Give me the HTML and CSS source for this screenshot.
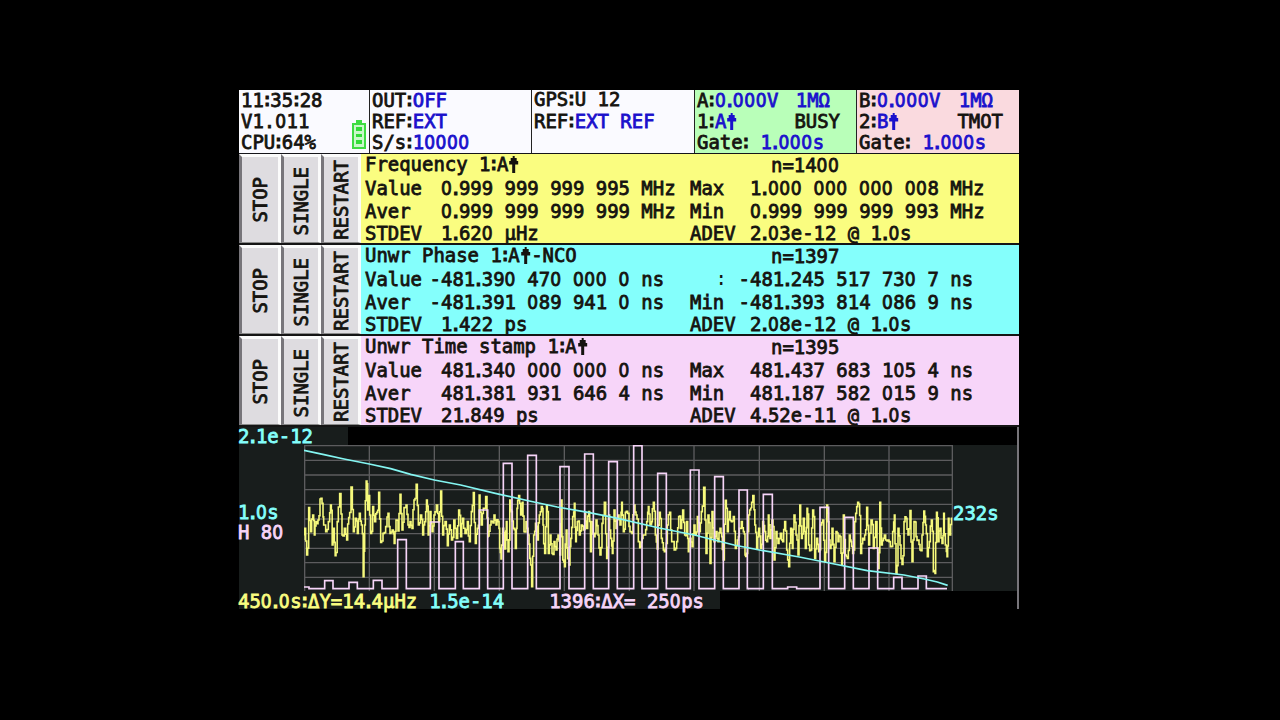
FILE: index.html
```html
<!DOCTYPE html>
<html>
<head>
  <meta charset="utf-8">
  <title>Frequency Counter</title>
  <link rel="stylesheet" href="styles.css">
</head>
<body>
  <svg width="0" height="0" class="defs">
    <symbol id="edge" viewBox="0 0 11 18">
      <path d="M4.500 0h2v2h2v3h1.500v3.500H7V17H4V8.500H1V5h1.500V2h2z" fill="currentColor"/>
    </symbol>
  </svg>

  <div class="screen">
    <div class="header">
      <div class="cell system">
        <div>11:35:28</div>
        <div>V1<b>.</b>011</div>
        <div>CPU:64%</div>
        <svg class="battery" width="14" height="29" viewBox="0 0 14 29">
          <path d="M4 0h6v3h4v26H0V3h4z" fill="#3edc42"/>
          <path d="M2 5h10v22H2z" fill="#c9f8ca"/>
          <path d="M4 7h6v4H4zM4 14h6v3H4zM4 20h6v4H4z" fill="#32dc37"/>
        </svg>
      </div>
      <div class="cell">
        <div>OUT:<span class="blue">OFF</span></div>
        <div>REF:<span class="blue">EXT</span></div>
        <div>S/s:<span class="blue">10000</span></div>
      </div>
      <div class="cell gps">
        <div>GPS:U 12</div>
        <div>REF:<span class="blue">EXT REF</span></div>
      </div>
      <div class="cell chan-a">
        <div class="split"><span>A:<span class="blue">0.000V</span></span><span class="blue unit">1MΩ</span></div>
        <div class="split"><span>1:<span class="blue">A<svg class="edge"><use href="#edge"/></svg></span></span><span class="state">BUSY</span></div>
        <div>Gate: <span class="blue">1.000s</span></div>
      </div>
      <div class="cell chan-b">
        <div class="split"><span>B:<span class="blue">0.000V</span></span><span class="blue unit">1MΩ</span></div>
        <div class="split"><span>2:<span class="blue">B<svg class="edge"><use href="#edge"/></svg></span></span><span class="state">TMOT</span></div>
        <div>Gate: <span class="blue">1.000s</span></div>
      </div>
    </div>

    <div class="panel yellow">
      <div class="buttons">
        <button><span>STOP</span></button>
        <button><span>SINGLE</span></button>
        <button><span>RESTART</span></button>
      </div>
      <div class="readout">
        <div class="title"><span>Frequency 1:A<svg class="edge"><use href="#edge"/></svg></span><span class="count">n=1400</span></div>
        <div class="row"><span>Value</span><span>0.999 999 999 995 MHz</span><span>Max</span><span>1.000 000 000 008 MHz</span></div>
        <div class="row"><span>Aver</span><span>0.999 999 999 999 MHz</span><span>Min</span><span>0.999 999 999 993 MHz</span></div>
        <div class="row"><span>STDEV</span><span>1.620 µHz</span><span>ADEV</span><span>2.03e-12 @ 1.0s</span></div>
      </div>
    </div>

    <div class="panel cyan">
      <div class="buttons">
        <button><span>STOP</span></button>
        <button><span>SINGLE</span></button>
        <button><span>RESTART</span></button>
      </div>
      <div class="readout">
        <div class="title"><span>Unwr Phase 1:A<svg class="edge"><use href="#edge"/></svg>-NCO</span><span class="count">n=1397</span></div>
        <div class="row"><span>Value</span><span class="neg">-481.390 470 000 0 ns</span><span class="partial">:</span><span class="neg">-481.245 517 730 7 ns</span></div>
        <div class="row"><span>Aver</span><span class="neg">-481.391 089 941 0 ns</span><span>Min</span><span class="neg">-481.393 814 086 9 ns</span></div>
        <div class="row"><span>STDEV</span><span>1.422 ps</span><span>ADEV</span><span>2.08e-12 @ 1.0s</span></div>
      </div>
    </div>

    <div class="panel pink">
      <div class="buttons">
        <button><span>STOP</span></button>
        <button><span>SINGLE</span></button>
        <button><span>RESTART</span></button>
      </div>
      <div class="readout">
        <div class="title"><span>Unwr Time stamp 1:A<svg class="edge"><use href="#edge"/></svg></span><span class="count">n=1395</span></div>
        <div class="row"><span>Value</span><span>481.340 000 000 0 ns</span><span>Max</span><span>481.437 683 105 4 ns</span></div>
        <div class="row"><span>Aver</span><span>481.381 931 646 4 ns</span><span>Min</span><span>481.187 582 015 9 ns</span></div>
        <div class="row"><span>STDEV</span><span>21.849 ps</span><span>ADEV</span><span>4.52e-11 @ 1.0s</span></div>
      </div>
    </div>

    <div class="graph">
      <div class="scale-top">2.1e-12</div>
      <div class="graph-body">
        <div class="axis-left">
          <div class="c-cyan">1.0s</div>
          <div class="c-pink">H 80</div>
        </div>
        <!-- plot units are 1/3 px -->
        <svg class="plot" width="649" height="146" viewBox="0 0 1947 438">
          <path class="grid" d="M0 2H1947M0 46H1947M0 90H1947M0 134H1947M0 178H1947M0 222H1947M0 266H1947M0 310H1947M0 353H1947M0 397H1947"/>
          <path class="grid" d="M2 0V438M196 0V438M391 0V438M586 0V438M781 0V438M976 0V438M1170 0V438M1366 0V438M1561 0V438M1755 0V438M1945 0V438"/>
          <g transform="translate(-207 -60)">
            <polyline class="freq" points="206,345 212,310 218,390 224,248 230,320 236,270 240,330 246,290 252,285 258,222 264,235 268,300 276,320 284,290 289,240 294,360 298,310 303,392 310,290 318,206 324,330 332,310 338,345 344,278 352,186 358,320 364,280 370,325 376,265 382,300 387,455 391,300 396,168 400,255 404,212 410,325 416,245 422,290 428,262 434,202 440,352 448,325 456,305 462,265 468,325 475,315 480,355 486,285 492,318 498,208 504,315 510,248 516,240 522,300 528,290 534,310 540,225 547,178 553,300 560,270 566,330 572,290 577,225 582,330 588,260 594,320 600,270 608,240 614,290 620,198 626,330 634,290 640,362 646,300 653,345 660,285 668,340 674,255 680,335 686,280 694,325 700,290 706,350 712,260 718,203 724,355 730,310 735,210 742,300 748,250 756,215 762,335"/>
            <path class="hist" d="M206 486H222V491H269V467H294V491H342V472H367V491H415V466H441V491H488V344H514V491H586V291H612V491H661V350H685V491H733V255H758V491H805"/>
          </g>
          <g transform="translate(555 -60)">
            <polyline class="freq" points="0,335 6,300 12,290 18,270 24,300 30,290 34,370 38,402 44,310 50,372 54,290 60,380 65,225 70,260 76,310 82,370 86,250 92,212 98,270 102,232 108,320 114,290 120,330 125,400 131,485 137,330 142,295 148,345 154,270 160,245 164,300 170,385 175,240 181,385 186,330 192,385 198,350 204,375 210,330 215,390 219,225 224,405 229,425 234,315 238,400 243,420 248,340 254,275 258,235 262,350 268,290 274,330 280,300 286,315 290,262 296,310 302,260 307,380 312,290 318,335 324,285 330,330 336,390 342,295 350,232 356,400 362,270 368,340 372,385 378,255 384,310 390,270 396,300 400,232 406,320 412,262 420,265 426,320 432,325 438,240 444,270 452,350 457,365 462,340 470,330 476,290 480,245 486,300 490,290 496,232 502,330 507,372 514,262 520,340 526,375 532,370 538,300 545,262 551,350 560,375 566,350 572,275 578,310 584,255 590,330 596,290 600,380 606,340 612,365 618,300 622,330 628,275 634,320 640,260 648,187 654,385 660,270 666,415 672,260 678,350 684,320 690,350 696,310 700,335 706,405 712,226 718,320 724,260 730,290 736,275 742,370 748,345 754,310 760,290 766,320 770,390 776,385 782,270 788,250"/>
            <path class="hist" d="M40 491H43V115H69V491H116V91H142V491H213V125H240V491H287V87H313V491H359V110H385V491H434V62H459V491H506V145H532V491H604V135H630V491H677V155H703V491H750V195H775V491H780"/>
          </g>
          <g transform="translate(1335 -60)">
            <polyline class="freq" points="8,250 15,212 20,300 26,370 32,310 38,370 44,290 50,320 56,350 60,270 66,340 72,285 78,405 84,320 90,355 98,325 104,350 110,290 116,375 122,425 128,310 132,370 138,270 144,330 150,390 155,240 160,340 166,280 172,370 176,250 182,360 188,375 194,255 200,400 206,340 212,380 218,300 224,285 230,410 236,240 240,290 246,370 252,310 258,410 264,320 270,350 276,335 280,420 286,270 292,390 298,400 304,330 308,350 314,385 320,290 326,245 332,237 338,385 344,340 350,330 356,247 362,360 370,285 376,370 384,290 390,430 395,232 400,360 406,340 414,345 420,345 428,365 434,320 438,270 444,445 450,310 456,360 462,418 468,290 474,280 480,330 486,257 492,410 498,290 504,335 510,345 516,375 522,330 527,258 532,300 538,395 544,350 550,285 556,440 560,445 565,262 570,350 576,310 582,355 586,265 592,360 596,395 600,280 605,330 610,280"/>
            <path class="hist" d="M-2 491H43V208H70V491H116V486H143V491H213V247H239V491H287V277H313V491H360V369H386V491H434V457H459V491H507V453H532V491H594"/>
          </g>
          <polyline class="phase" points="0,16 60,29 120,42 196,57 260,71 320,88 391,105 470,120 574,145 676,168 760,186 856,203 931,218 1066,249 1171,270 1290,300 1366,315 1486,336 1576,354 1690,377 1800,390 1861,402 1900,411 1931,421"/>
        </svg>
        <div class="axis-right c-cyan">232s</div>
      </div>
      <div class="scale-bottom">
        <span class="c-yellow">450.0s:ΔY=14.4µHz</span><span class="c-cyan tau">1.5e-14</span><span class="c-pink bins">1396:ΔX= 250ps</span>
      </div>
    </div>
  </div>

  <script src="lcd.js"></script>
</body>
</html>
```
FILE: styles.css
```css
* {
  margin: 0;
  padding: 0;
  box-sizing: border-box;
}

body {
  width: 1280px;
  height: 720px;
  overflow: hidden;
  background: #000;
  padding: 90px 0 0 239px;
}

.defs {
  display: block;
}

.screen {
  width: 780px;
  height: 518px;
  font-family: "DejaVu Sans Mono", monospace;
  font-size: 18.95px;
  line-height: 21px;
  color: #15130f;
  -webkit-text-stroke: 0.8px currentColor;
}

/* narrow punctuation and open zero of the display font */
.nar {
  margin: 0 -2.44px;
  -webkit-text-stroke-width: 1.1px;
}

.colon {
  position: relative;
  top: -1px;
}

.zero {
  font-family: "DejaVu Sans Condensed", "DejaVu Sans", sans-serif;
  font-stretch: condensed;
  letter-spacing: 0.55px;
}

.edge {
  width: 11.375px;
  height: 18px;
  vertical-align: -3px;
}

.header {
  display: grid;
  grid-template-columns: 131px 162px 163px 162px 162px;
  height: 64px;
  border-bottom: 2px solid #15151a;
}

.cell {
  background: #fafaff;
  padding-left: 2px;
  border-right: 1px solid #222;
}

.cell > div {
  height: 21px;
}

.cell:last-child {
  border-right: none;
}

.cell b {
  font-weight: normal;
}

.system {
  position: relative;
}

.battery {
  position: absolute;
  right: 3px;
  bottom: 4px;
}

.gps > div:first-child {
  margin-top: -1px;
  margin-bottom: 1px;
}

.chan-a {
  background: #b9ffb9;
}

.chan-b {
  background: #fadadf;
}

.split {
  display: flex;
  justify-content: space-between;
}

.unit {
  margin-right: 26px;
}

.state {
  margin-right: 16px;
}

.blue {
  color: #1a10cc;
}

.panel {
  display: flex;
  height: 91px;
  border-bottom: 2px solid #151515;
}

.yellow {
  background: #fafd80;
}

.cyan {
  background: #84fffc;
}

.pink {
  background: #f7d5f9;
}

.buttons {
  display: grid;
  grid-template-columns: 42px 40px 40px;
}

.buttons button {
  display: flex;
  align-items: center;
  justify-content: center;
  font: inherit;
  color: inherit;
  background: #dedce0;
  border: solid;
  border-width: 3px 3px 1px 3px;
  border-color: #fbfbfb #fbfbfb #8a8a8a #77757a;
  overflow: hidden;
  -webkit-text-stroke: inherit;
}

.buttons button:nth-child(2) {
  padding-top: 4px;
}

.buttons span {
  writing-mode: vertical-rl;
  transform: rotate(180deg);
}

.readout {
  flex: 1;
  padding-left: 4px;
}

.title {
  display: grid;
  grid-template-columns: 406px 1fr;
  line-height: 20px;
  height: 23px;
}

.count {
  padding-top: 1px;
}

.row {
  display: grid;
  grid-template-columns: 76px 249px 60px 1fr;
  height: 22.6px;
  line-height: 22.6px;
}

.neg {
  margin-left: -11.4px;
}

.partial {
  padding-left: 28px;
}

.partial .nar {
  -webkit-text-stroke-width: 0;
}

.graph {
  border-right: 2px solid #77757a;
  height: 182px;
}

.scale-top {
  width: 109px;
  height: 18px;
  line-height: 19px;
  background: #181d1c;
  color: #84fffc;
  text-indent: -1px;
}

.graph-body {
  display: flex;
  height: 146px;
  background: #181d1c;
}

.axis-left {
  width: 65px;
  padding-top: 58px;
  line-height: 19.500px;
  text-indent: -1px;
}

.plot {
  flex: none;
}

.grid {
  fill: none;
  stroke: #5c5c5e;
  stroke-width: 4;
}

.freq {
  fill: none;
  stroke: #f6f97c;
  stroke-width: 4.8;
}

.hist {
  fill: none;
  stroke: #f7d5f9;
  stroke-width: 5;
}

.phase {
  fill: none;
  stroke: #84f6f2;
  stroke-width: 5;
}

.axis-right {
  padding-top: 58px;
  line-height: 20px;
}

.scale-bottom {
  display: flex;
  width: 481px;
  height: 18px;
  line-height: 20px;
  background: #181d1c;
  text-indent: -1px;
}

.c-cyan {
  color: #84fffc;
}

.c-pink {
  color: #f7d5f9;
}

.c-yellow {
  color: #fafd80;
}

.tau {
  margin-left: 13px;
}

.bins {
  margin-left: 46px;
}
```
FILE: lcd.js
```js
// colons and dots are narrower than the other characters, zero has no dot inside
const lcd = document.querySelector('.screen');
const walker = document.createTreeWalker(lcd, NodeFilter.SHOW_TEXT);
const nodes = [];
while (walker.nextNode()) nodes.push(walker.currentNode);

nodes.forEach(node => {
  if (!/[.:0]/.test(node.data) || node.parentNode.tagName === 'B') return;
  const frag = document.createDocumentFragment();
  node.data.split(/([.:]|0+)/).forEach(part => {
    if (!part) return;
    if (!/^[.:0]/.test(part)) {
      frag.append(part);
      return;
    }
    const span = document.createElement('span');
    span.className = part[0] === '0' ? 'zero' : part === ':' ? 'nar colon' : 'nar';
    span.textContent = part;
    frag.append(span);
  });
  node.replaceWith(frag);
});

// draw the frequency trace as vertical pixel runs, one intermediate sample per step
document.querySelectorAll('.freq').forEach(line => {
  const pts = line.getAttribute('points').split(' ').map(p => p.split(',').map(Number));
  const out = [pts[0].join()];
  for (let i = 1; i < pts.length; i++) {
    const [x0, y0] = pts[i - 1];
    const [x1, y1] = pts[i];
    const mid = y0 + (y1 - y0) * (i % 3 === 0 ? 0.2 : 0.55) + ((i * 37) % 23) - 11;
    const xm = (x0 + x1) / 2;
    out.push(`${x0},${mid}`, `${xm},${mid}`, `${xm},${y1}`, `${x1},${y1}`);
  }
  line.setAttribute('points', out.join(' '));
});
```
